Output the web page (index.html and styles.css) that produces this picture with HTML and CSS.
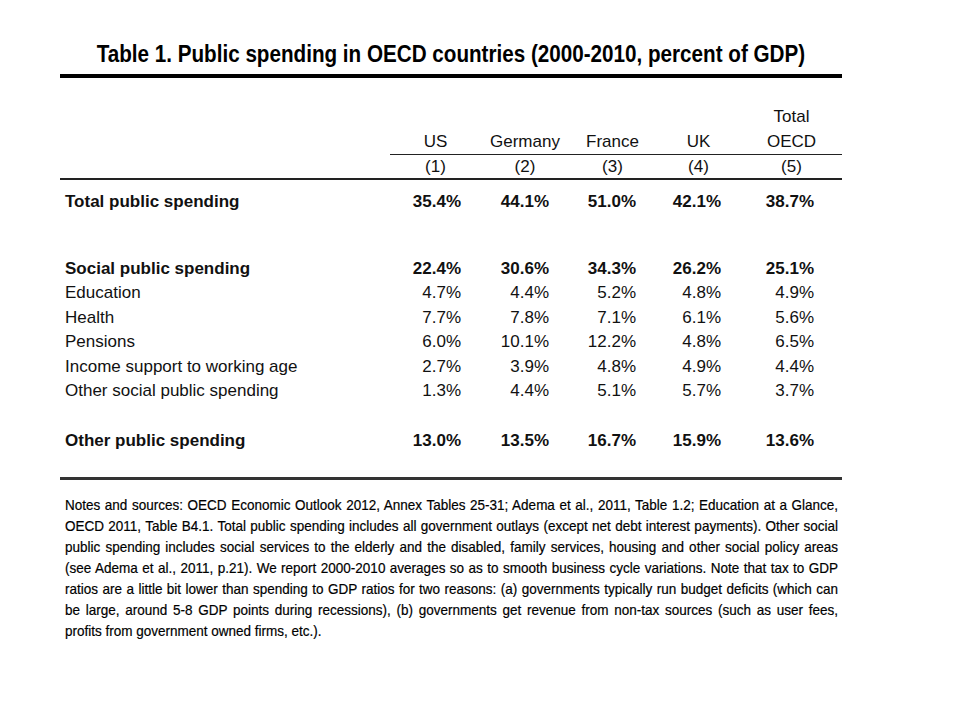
FILE: index.html
```html
<!DOCTYPE html>
<html>
<head>
<meta charset="utf-8">
<link rel="stylesheet" href="styles.css">
</head>
<body>
<div class="page">
  <h1 class="title"><span class="title-text">Table 1. Public spending in OECD countries (2000-2010, percent of GDP)</span></h1>
  <div class="table">
    <div class="head head-top">
      <div class="lab"></div>
      <div class="hc"></div><div class="hc"></div><div class="hc"></div><div class="hc"></div>
      <div class="hc">Total</div>
    </div>
    <div class="head head-names">
      <div class="lab"></div>
      <div class="hc">US</div><div class="hc">Germany</div><div class="hc">France</div><div class="hc">UK</div><div class="hc">OECD</div>
    </div>
    <div class="head head-nums">
      <div class="lab"></div>
      <div class="hc">(1)</div><div class="hc">(2)</div><div class="hc">(3)</div><div class="hc">(4)</div><div class="hc">(5)</div>
    </div>
    <div class="row bold first">
      <div class="lab">Total public spending</div>
      <div class="num">35.4%</div><div class="num">44.1%</div><div class="num">51.0%</div><div class="num">42.1%</div><div class="num">38.7%</div>
    </div>
    <div class="row bold gap-big">
      <div class="lab">Social public spending</div>
      <div class="num">22.4%</div><div class="num">30.6%</div><div class="num">34.3%</div><div class="num">26.2%</div><div class="num">25.1%</div>
    </div>
    <div class="row">
      <div class="lab">Education</div>
      <div class="num">4.7%</div><div class="num">4.4%</div><div class="num">5.2%</div><div class="num">4.8%</div><div class="num">4.9%</div>
    </div>
    <div class="row">
      <div class="lab">Health</div>
      <div class="num">7.7%</div><div class="num">7.8%</div><div class="num">7.1%</div><div class="num">6.1%</div><div class="num">5.6%</div>
    </div>
    <div class="row">
      <div class="lab">Pensions</div>
      <div class="num">6.0%</div><div class="num">10.1%</div><div class="num">12.2%</div><div class="num">4.8%</div><div class="num">6.5%</div>
    </div>
    <div class="row">
      <div class="lab">Income support to working age</div>
      <div class="num">2.7%</div><div class="num">3.9%</div><div class="num">4.8%</div><div class="num">4.9%</div><div class="num">4.4%</div>
    </div>
    <div class="row">
      <div class="lab">Other social public spending</div>
      <div class="num">1.3%</div><div class="num">4.4%</div><div class="num">5.1%</div><div class="num">5.7%</div><div class="num">3.7%</div>
    </div>
    <div class="row bold gap-row last">
      <div class="lab">Other public spending</div>
      <div class="num">13.0%</div><div class="num">13.5%</div><div class="num">16.7%</div><div class="num">15.9%</div><div class="num">13.6%</div>
    </div>
  </div>
  <div class="notes">
    <span class="line">Notes and sources: OECD Economic Outlook 2012, Annex Tables 25-31; Adema et al., 2011, Table 1.2; Education at a Glance,</span>
    <span class="line">OECD 2011, Table B4.1. Total public spending includes all government outlays (except net debt interest payments). Other social</span>
    <span class="line">public spending includes social services to the elderly and the disabled, family services, housing and other social policy areas</span>
    <span class="line">(see Adema et al., 2011, p.21). We report 2000-2010 averages so as to smooth business cycle variations. Note that tax to GDP</span>
    <span class="line">ratios are a little bit lower than spending to GDP ratios for two reasons: (a) governments typically run budget deficits (which can</span>
    <span class="line">be large, around 5-8 GDP points during recessions), (b) governments get revenue from non-tax sources (such as user fees,</span>
    <span class="line end">profits from government owned firms, etc.).</span>
  </div>
</div>
</body>
</html>
```
FILE: styles.css
```css
html, body {
  margin: 0;
  padding: 0;
  background: #fff;
}
body {
  width: 960px;
  height: 720px;
  overflow: hidden;
  font-family: "Liberation Sans", Arial, sans-serif;
  color: #111;
}
.page {
  margin-left: 60px;
  width: 782px;
  padding-top: 39px;
}
.title {
  margin: 0;
  display: flex;
  justify-content: center;
  font-size: 24px;
  line-height: 30px;
  font-weight: bold;
  color: #000;
  white-space: nowrap;
  padding-bottom: 5px;
  border-bottom: 4px solid #000;
}
.title-text {
  display: inline-block;
  flex: none;
  transform: scaleX(0.86);
  transform-origin: 50% 50%;
}
.table {
  font-size: 17px;
}
.head, .row {
  display: grid;
  grid-template-columns: 330px 91px 88px 87px 85px 101px;
}
.head {
  line-height: 25px;
}
.head-top {
  margin-top: 26px;
}
.head-names .hc {
  border-bottom: 1px solid #222;
}
.head-nums {
  line-height: 23px;
  border-bottom: 2px solid #222;
}
.hc {
  text-align: center;
}
.row {
  line-height: 24.5px;
}
.lab {
  padding-left: 5px;
}
.num {
  text-align: right;
  padding-right: 20px;
}
.num:last-child {
  padding-right: 28px;
}
.bold {
  font-weight: bold;
}
.first {
  margin-top: 10px;
}
.gap-big {
  margin-top: 42px;
}
.gap-row {
  margin-top: 25px;
}
.last {
  padding-bottom: 24px;
  border-bottom: 3px solid #333;
}
.notes {
  margin: 14px 0 0 5px;
  width: 859px;
  font-size: 15px;
  line-height: 21px;
  color: #000;
  -webkit-text-stroke: 0.2px #000;
  transform: scaleX(0.9);
  transform-origin: 0 0;
}
.line {
  display: block;
  text-align: justify;
  text-align-last: justify;
  white-space: nowrap;
}
.line.end {
  text-align-last: left;
}
```
